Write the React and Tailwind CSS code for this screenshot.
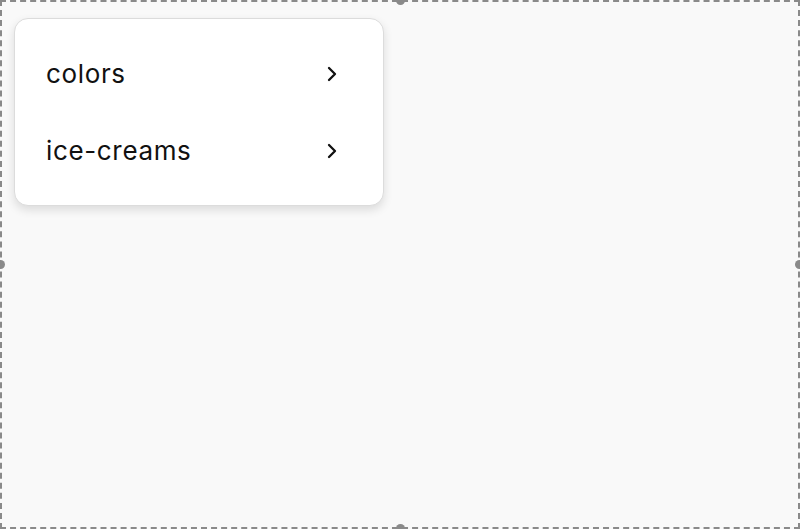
import { ChevronRight } from 'lucide-react';

const items = ['colors', 'ice-creams'];

const MenuRow = ({ label }) => (
  <div className="flex h-[77px] items-center justify-between pl-[31px] pr-[39px]">
    <span className="text-[26px] leading-none tracking-[0.025em] text-[#111]">{label}</span>
    <ChevronRight className="h-6 w-6 text-[#111]" strokeWidth={2.3} />
  </div>
);

export default function App() {
  return (
    <div className="relative h-[529px] w-[800px] border-2 border-dashed border-[#8a8a8a] bg-[#f9f9f9] font-['Inter',sans-serif]">
      <div className="ml-[12px] mt-[16px] w-[370px] rounded-[14px] border border-[#dcdcdc] bg-white py-4 shadow-[0_4px_10px_rgba(0,0,0,0.12)]">
        {items.map((label) => (
          <MenuRow key={label} label={label} />
        ))}
      </div>

      {/* resize handles */}
      <span className="absolute left-[394px] top-[-6px] h-[9px] w-[9px] rounded-full bg-[#8a8a8a]" />
      <span className="absolute left-[394px] bottom-[-6px] h-[9px] w-[9px] rounded-full bg-[#8a8a8a]" />
      <span className="absolute left-[-6px] top-[258px] h-[9px] w-[9px] rounded-full bg-[#8a8a8a]" />
      <span className="absolute right-[-6px] top-[258px] h-[9px] w-[9px] rounded-full bg-[#8a8a8a]" />
    </div>
  );
}
